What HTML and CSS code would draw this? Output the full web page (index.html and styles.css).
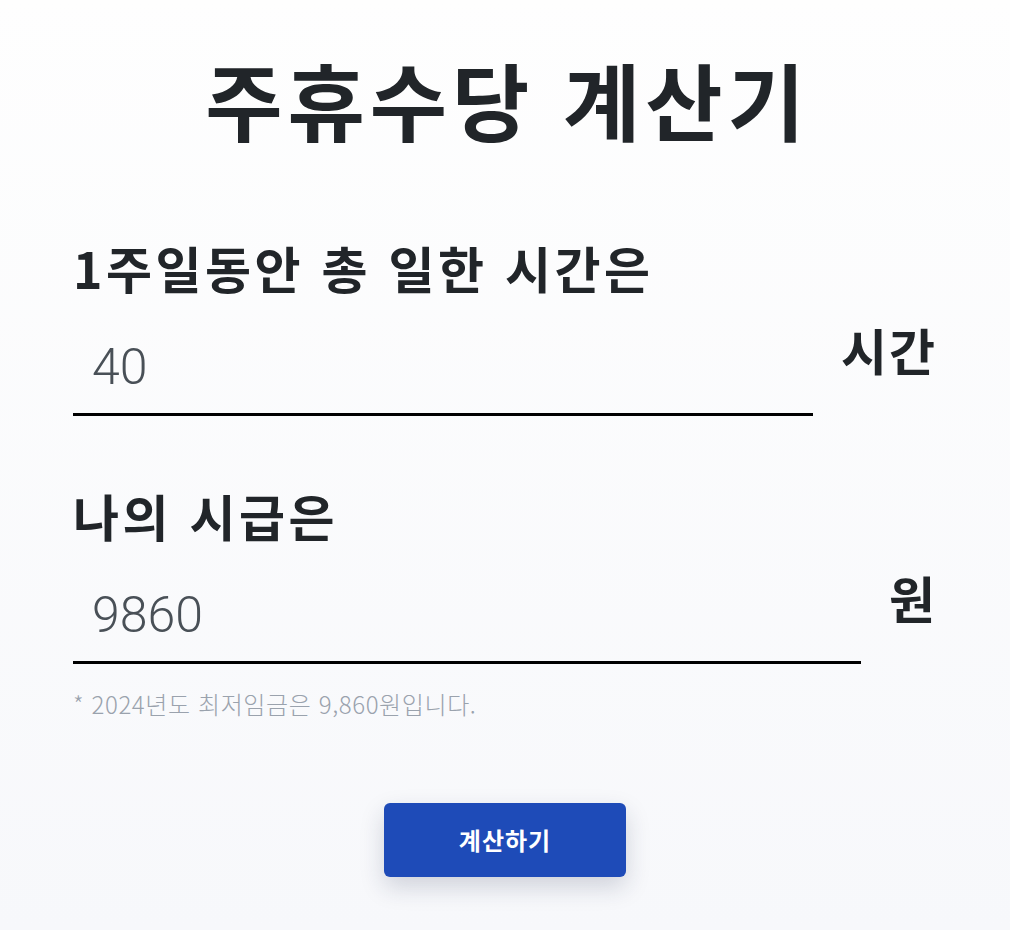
FILE: index.html
```html
<!DOCTYPE html>
<html lang="ko">
<head>
<meta charset="utf-8">
<title>주휴수당 계산기</title>
<link rel="stylesheet" href="styles.css">
</head>
<body>
<main class="calc">
  <h1 class="calc-title">주휴수당 계산기</h1>

  <section class="field">
    <label class="field-label" for="hours">1주일동안 총 일한 시간은</label>
    <div class="field-row">
      <input class="field-input" id="hours" type="text" value="40">
      <span class="field-unit">시간</span>
    </div>
  </section>

  <section class="field field-wage">
    <label class="field-label" for="wage">나의 시급은</label>
    <div class="field-row">
      <input class="field-input" id="wage" type="text" value="9860">
      <span class="field-unit">원</span>
    </div>
    <p class="field-note">* 2024년도 최저임금은 9,860원입니다.</p>
  </section>

  <div class="actions">
    <button class="btn-primary" type="button">계산하기</button>
  </div>
</main>
</body>
</html>
```

FILE: styles.css
```css
html, body {
  margin: 0;
  padding: 0;
}

body {
  min-height: 930px;
  background: linear-gradient(180deg, #fefefe 0%, #f7f8fb 100%);
  font-family: "Noto Sans CJK KR", "Noto Sans", sans-serif;
  color: #212529;
}

.calc {
  width: 864px;
  margin: 0 auto;
  padding-top: 49px;
  display: flex;
  flex-direction: column;
}

.calc-title {
  margin: 0 0 87px;
  font-size: 84px;
  font-weight: 700;
  line-height: 1.2;
  text-align: center;
  letter-spacing: 5px;
  text-indent: 5px;
}

.field {
  display: flex;
  flex-direction: column;
}

.field-label {
  font-size: 50px;
  font-weight: 700;
  line-height: 1.2;
  letter-spacing: 3.5px;
}

.field-row {
  display: flex;
  align-items: flex-start;
  gap: 28px;
  margin-top: 24px;
}

.field-input {
  flex: 1;
  min-width: 0;
  box-sizing: border-box;
  height: 95px;
  padding: 0 19px;
  border: 0;
  border-bottom: 3px solid #000;
  background: transparent;
  font-family: Roboto, "Noto Sans", sans-serif;
  font-weight: 300;
  font-size: 50px;
  color: #495057;
  outline: none;
}

.field-unit {
  font-size: 50px;
  font-weight: 700;
  line-height: 1.2;
  letter-spacing: 2px;
  margin-top: -2px;
}

.field-wage {
  margin-top: 69px;
}

.field-note {
  margin: 22px 0 0;
  font-size: 24px;
  font-weight: 300;
  letter-spacing: 0.6px;
  color: #9aa2ad;
}

.actions {
  display: flex;
  justify-content: center;
  margin-top: 82px;
}

.btn-primary {
  width: 242px;
  height: 74px;
  border: 0;
  border-radius: 6px;
  background: #1e4bb8;
  color: #fff;
  font-family: "Noto Sans CJK KR", sans-serif;
  font-size: 24px;
  font-weight: 700;
  letter-spacing: 1px;
  box-shadow: 0 10px 24px rgba(30, 40, 70, 0.18);
}
```
